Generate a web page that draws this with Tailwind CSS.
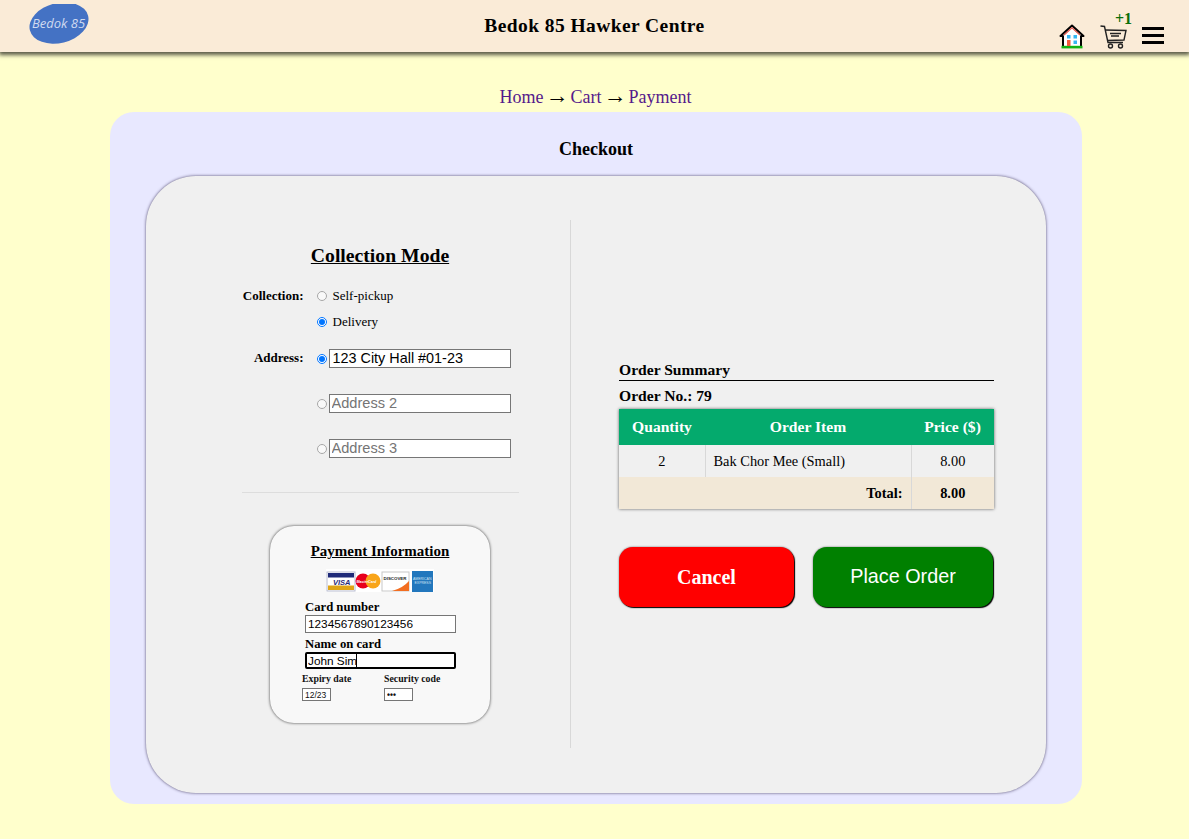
<!DOCTYPE html>
<html lang="en">
<head>
    <meta charset="UTF-8">
    <meta name="viewport" content="width=device-width, initial-scale=1.0">
    <title>Bedok 85 Hawker Centre - Checkout</title>
    <script src="https://cdn.jsdelivr.net/npm/@tailwindcss/browser@4"></script>
</head>
<body class="bg-[#ffffcc] font-['Liberation_Serif',serif] text-black h-[839px] overflow-hidden">

    <!-- top bar -->
    <header class="relative h-[52px] bg-[#faebd7] shadow-[0_2px_4px_1px_rgba(0,0,0,0.65)] grid grid-cols-[1fr_auto_1fr] items-center">
        <div class="pl-[29px]">
            <svg class="block" width="60" height="44" viewBox="0 0 60 44">
                <ellipse cx="30" cy="19" rx="30" ry="20" transform="rotate(-14 30 19)" fill="#4472c4"/>
                <text x="3" y="24" font-family="Open Sans, sans-serif" font-style="italic" font-size="13" fill="#cfdaf0">Bedok 85</text>
            </svg>
        </div>
        <h1 class="text-[19.5px] font-bold tracking-[0.42px] leading-none">Bedok 85 Hawker Centre</h1>
        <div class="flex items-end justify-end h-full pr-[25px] pb-[3px]">
            <svg class="mr-[15px]" width="26" height="25" viewBox="0 0 26 25">
                <path d="M13 1.5 L24.5 12 L22 12 L22 23 L4 23 L4 12 L1.5 12 Z" fill="#fff" stroke="#000" stroke-width="2" stroke-linejoin="round"/>
                <path d="M5 11 L13 3.8 L21 11" fill="none" stroke="#e2574c" stroke-width="1.2"/>
                <rect x="2.5" y="21.8" width="21" height="2.6" fill="#12b312"/>
                <rect x="8" y="11" width="3.5" height="3.5" fill="#35b6f2"/>
                <rect x="14.5" y="11" width="3.5" height="3.5" fill="#35b6f2"/>
                <rect x="14.5" y="16.5" width="3.5" height="3.5" fill="#35b6f2"/>
                <rect x="8" y="16" width="3.5" height="6" fill="#f4593a"/>
            </svg>
            <div class="relative mr-[15px]">
                <span class="absolute right-[-5px] top-[-14px] text-[16px] leading-none font-bold text-[#0a6e0a]">+1</span>
                <svg class="block" width="27" height="24" viewBox="0 0 27 24" fill="none" stroke="#222" stroke-width="1.4">
                    <path d="M0.5 1 L4.5 1.5 L8 17.5 L23 17.5"/>
                    <path d="M5 5 L26 5.5 L24 15 L7.5 15.5"/>
                    <path d="M10 8.5 H21 M11 11 H19" stroke-width="1.5"/>
                    <circle cx="10.5" cy="21" r="2"/>
                    <circle cx="20.5" cy="21" r="2"/>
                </svg>
            </div>
            <div class="flex flex-col gap-[4px] w-[22px] pb-[5px]">
                <div class="h-[3px] bg-black"></div>
                <div class="h-[3px] bg-black"></div>
                <div class="h-[3px] bg-black"></div>
            </div>
        </div>
    </header>

    <!-- breadcrumb -->
    <nav class="pt-[32px] pl-[2px] h-[60px] text-center text-[18px] leading-[21px] text-[#551a8b]">
        <a href="#">Home</a> <span class="text-black text-[23px] leading-none mx-[-2.5px]">&rarr;</span> <a href="#">Cart</a> <span class="text-black text-[23px] leading-none mx-[-2.5px]">&rarr;</span> <a href="#">Payment</a>
    </nav>

    <main class="mx-[110px] w-[972px] h-[692px] bg-[#e8e8ff] rounded-[24px] px-[36px] pt-[27px]">
        <h2 class="text-center text-[18px] leading-[21px] font-bold mb-[16px]">Checkout</h2>

        <div class="h-[617px] bg-[#f0f0f0] rounded-[50px] shadow-[0_0_3px_rgba(40,30,70,0.8)] pt-[44px] pb-[45px] grid grid-cols-[425px_1fr]">

            <!-- collection + payment -->
            <section class="border-r border-[#d8d8d8] pl-[44px] flex flex-col items-center">
                <h3 class="mt-[24px] text-[19.7px] leading-[23px] font-bold underline">Collection Mode</h3>

                <div class="mt-[22px] w-[277px] pb-[34px] border-b border-[#dddddd]">
                    <div class="flex">
                        <div class="w-[62px] text-right text-[13px] font-bold leading-[14px]">Collection:</div>
                        <div class="ml-[13px] flex flex-col gap-[12px] text-[13px] leading-[14px]">
                            <label class="flex items-center"><input type="radio" name="mode" class="w-[10px] h-[10px] m-0 mr-[6px] opacity-60">Self-pickup</label>
                            <label class="flex items-center"><input type="radio" name="mode" checked class="w-[10px] h-[10px] m-0 mr-[6px]">Delivery</label>
                        </div>
                    </div>
                    <div class="flex mt-[20px]">
                        <div class="w-[62px] text-right text-[13px] font-bold leading-[18px]">Address:</div>
                        <div class="ml-[13px] flex flex-col gap-[26px]">
                            <label class="flex items-center"><input type="radio" name="addr" checked class="w-[10px] h-[10px] m-0 mr-[2px]"><input type="text" value="123 City Hall #01-23" class="w-[182px] h-[19px] bg-white border border-[#767676] pl-[3px] pb-[2px] font-['Liberation_Sans',sans-serif] text-[14.4px] leading-none"></label>
                            <label class="flex items-center"><input type="radio" name="addr" class="w-[10px] h-[10px] m-0 mr-[2px] opacity-60"><input type="text" placeholder="Address 2" class="w-[182px] h-[19px] bg-white border border-[#767676] pl-[2px] pb-[2px] font-['Liberation_Sans',sans-serif] text-[14.6px] leading-none placeholder:text-[#757575]"></label>
                            <label class="flex items-center"><input type="radio" name="addr" class="w-[10px] h-[10px] m-0 mr-[2px] opacity-60"><input type="text" placeholder="Address 3" class="w-[182px] h-[19px] bg-white border border-[#767676] pl-[2px] pb-[2px] font-['Liberation_Sans',sans-serif] text-[14.6px] leading-none placeholder:text-[#757575]"></label>
                        </div>
                    </div>
                </div>

                <div class="mt-[33px] w-[220px] h-[197px] bg-[#f8f8f8] rounded-[24px] shadow-[0_0_3px_rgba(0,0,0,0.75)] pt-[16px] pl-[35px]">
                    <h4 class="ml-[-35px] text-center text-[15px] leading-[18px] font-bold underline">Payment Information</h4>
                    <svg class="block ml-[21px] mt-[9px]" width="108" height="23" viewBox="0 0 108 23">
                        <rect width="108" height="23" fill="#fff"/>
                        <rect x="1" y="3" width="28" height="19" fill="#fff" stroke="#b8bcd0"/>
                        <rect x="2" y="4" width="26" height="4.5" fill="#1f2a78"/>
                        <rect x="2" y="16.5" width="26" height="4.5" fill="#e0a516"/>
                        <text x="7" y="15.5" font-family="Liberation Sans, sans-serif" font-size="7.5" font-weight="bold" font-style="italic" fill="#1f2a78">VISA</text>
                        <circle cx="37" cy="12" r="7.5" fill="#e8001c"/>
                        <circle cx="47" cy="12" r="7.5" fill="#f9a51a"/>
                        <text x="30.5" y="13.5" font-family="Liberation Sans, sans-serif" font-size="3.6" font-style="italic" font-weight="bold" fill="#fff">MasterCard</text>
                        <rect x="56" y="3" width="27" height="19" fill="#fff" stroke="#c8c8c8"/>
                        <path d="M83 12 V22 H66 Q77 19 83 12 Z" fill="#f26e21"/>
                        <text x="57.5" y="11" font-family="Liberation Sans, sans-serif" font-size="4.4" font-weight="bold" fill="#222">DISCOVER</text>
                        <rect x="86" y="2" width="21" height="21" fill="#2277bd"/>
                        <text x="87" y="11" font-family="Liberation Sans, sans-serif" font-size="3.5" fill="#cfe4f5">AMERICAN</text>
                        <text x="88.5" y="15" font-family="Liberation Sans, sans-serif" font-size="3.5" fill="#cfe4f5">EXPRESS</text>
                    </svg>
                    <label class="block mt-[8px] text-[12.7px] leading-[15px] font-bold">Card number</label>
                    <input type="text" value="1234567890123456" class="block w-[151px] h-[18px] bg-white border border-[#767676] px-[2px] font-['Liberation_Sans',sans-serif] text-[11.8px] leading-none">
                    <label class="block mt-[4px] text-[12.7px] leading-[15px] font-bold">Name on card</label>
                    <div class="relative w-[151px] h-[17px]">
                        <input type="text" value="John Sim" class="block w-full h-full bg-white border-2 border-black rounded-[2px] px-[1px] font-['Liberation_Sans',sans-serif] text-[11.8px] leading-none">
                        <span class="absolute left-[51px] top-[2px] w-px h-[13px] bg-black"></span>
                    </div>
                    <div class="flex ml-[-3px] mt-[4px] text-[9.8px] leading-[11px] font-bold text-[#111]">
                        <div class="w-[82px]">
                            <div>Expiry date</div>
                            <input type="text" value="12/23" class="block mt-[4px] w-[29px] h-[13px] bg-white border border-[#767676] px-[2px] font-['Liberation_Sans',sans-serif] text-[8.5px] font-normal leading-none">
                        </div>
                        <div>
                            <div>Security code</div>
                            <input type="password" value="123" class="block mt-[4px] w-[29px] h-[13px] bg-white border border-[#767676] px-[2px] font-['Liberation_Sans',sans-serif] text-[8.5px] leading-none">
                        </div>
                    </div>
                </div>
            </section>

            <!-- order summary -->
            <section class="flex flex-col justify-center pl-[48px] pr-[50px]">
                <h3 class="text-[15.6px] leading-[18px] font-bold border-b border-black pb-[1px] w-[375px]">Order Summary</h3>
                <p class="mt-[6px] text-[15.6px] leading-[18px] font-bold">Order No.: 79</p>
                <table class="mt-[4px] w-[375px] border-collapse text-[14.4px] shadow-[0_0_3px_rgba(0,0,0,0.6)] table-fixed">
                    <thead>
                        <tr class="h-[36px] bg-[#04aa6d] text-white text-[15.6px]">
                            <th class="w-[86px] font-bold">Quantity</th>
                            <th class="font-bold">Order Item</th>
                            <th class="w-[83px] font-bold">Price ($)</th>
                        </tr>
                    </thead>
                    <tbody>
                        <tr class="h-[32px]">
                            <td class="text-center border-r border-[#d8d8d8] pt-[1px]">2</td>
                            <td class="pl-[8px] border-r border-[#d8d8d8] pt-[1px]">Bak Chor Mee (Small)</td>
                            <td class="text-center pt-[1px]">8.00</td>
                        </tr>
                        <tr class="h-[32px] bg-[#f2e8d7] font-bold">
                            <td colspan="2" class="text-right pr-[8px] border-r border-[#d8d8d8] pt-[1px]">Total:</td>
                            <td class="text-center pt-[1px]">8.00</td>
                        </tr>
                    </tbody>
                </table>
                <div class="flex gap-[19px] mt-[38px]">
                    <button class="w-[175px] h-[60px] bg-[#ff0000] text-white text-[20px] font-bold rounded-[14px] shadow-[1px_1px_1px_#000,0_0_2px_rgba(0,0,0,0.6)]">Cancel</button>
                    <button class="w-[180px] h-[60px] bg-[#008000] text-white font-['Liberation_Sans',sans-serif] text-[19.8px] rounded-[14px] shadow-[1px_1px_1px_#000,0_0_2px_rgba(0,0,0,0.6)]">Place Order</button>
                </div>
            </section>
        </div>
    </main>
</body>
</html>
